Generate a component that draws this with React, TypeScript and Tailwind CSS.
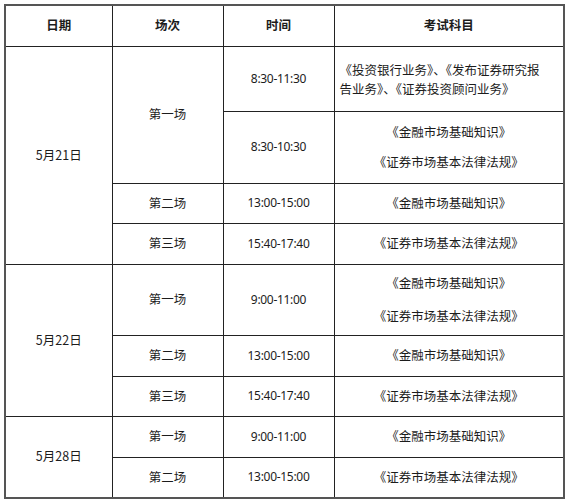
import React from 'react'

type Session = {
    name: string
    slots: { time: string; subjects: string[]; h: number; gap?: string; left?: boolean }[]
}

type Day = { date: string; sessions: Session[] }

const days: Day[] = [
    {
        date: '5月21日',
        sessions: [
            {
                name: '第一场',
                slots: [
                    { time: '8:30-11:30', subjects: ['《投资银行业务》、《发布证券研究报', '告业务》、《证券投资顾问业务》'], h: 65, left: true },
                    { time: '8:30-10:30', subjects: ['《金融市场基础知识》', '《证券市场基本法律法规》'], h: 72, gap: 'gap-[11px]' },
                ],
            },
            { name: '第二场', slots: [{ time: '13:00-15:00', subjects: ['《金融市场基础知识》'], h: 40 }] },
            { name: '第三场', slots: [{ time: '15:40-17:40', subjects: ['《证券市场基本法律法规》'], h: 41 }] },
        ],
    },
    {
        date: '5月22日',
        sessions: [
            {
                name: '第一场',
                slots: [{ time: '9:00-11:00', subjects: ['《金融市场基础知识》', '《证券市场基本法律法规》'], h: 71, gap: 'gap-[14px]' }],
            },
            { name: '第二场', slots: [{ time: '13:00-15:00', subjects: ['《金融市场基础知识》'], h: 41 }] },
            { name: '第三场', slots: [{ time: '15:40-17:40', subjects: ['《证券市场基本法律法规》'], h: 40 }] },
        ],
    },
    {
        date: '5月28日',
        sessions: [
            { name: '第一场', slots: [{ time: '9:00-11:00', subjects: ['《金融市场基础知识》'], h: 41 }] },
            { name: '第二场', slots: [{ time: '13:00-15:00', subjects: ['《证券市场基本法律法规》'], h: 41 }] },
        ],
    },
]

const cell = 'border border-[#222] text-center align-middle p-0'

export default function App() {
    const rows: React.ReactNode[] = []

    days.forEach((day, di) => {
        const dayRows = day.sessions.reduce((n, s) => n + s.slots.length, 0)
        let first = true
        day.sessions.forEach((session, si) => {
            session.slots.forEach((slot, ti) => {
                rows.push(
                    <tr key={`${di}-${si}-${ti}`} style={{ height: slot.h }}>
                        {first && (
                            <td rowSpan={dayRows} className={cell}>
                                {day.date}
                            </td>
                        )}
                        {ti === 0 && (
                            <td rowSpan={session.slots.length} className={cell}>
                                {session.name}
                            </td>
                        )}
                        <td className={`${cell} font-['Noto_Sans',sans-serif] text-[12px] tracking-[-0.3px]`}>
                            {slot.time}
                        </td>
                        <td className={`${cell} px-[4px]`}>
                            <div className={`flex flex-col ${slot.left ? 'items-start pl-[1px] leading-[19px] whitespace-nowrap' : 'items-center'} ${slot.gap ?? ''}`}>
                                {slot.subjects.map(s => (
                                    <p key={s}>{s}</p>
                                ))}
                            </div>
                        </td>
                    </tr>
                )
                first = false
            })
        })
    })

    return (
        <div className="w-[568px] h-[500px] bg-white pt-[4px] pl-[4px] font-['Noto_Sans_CJK_SC',sans-serif] text-[12.5px] text-[#1c1c1c]">
            <table className="table-fixed border-collapse w-[559px] border-2 border-[#555]">
                <colgroup>
                    <col className="w-[107px]" />
                    <col className="w-[111px]" />
                    <col className="w-[111px]" />
                    <col className="w-[230px]" />
                </colgroup>
                <thead>
                    <tr style={{ height: 41 }} className="font-bold">
                        <th className={cell}>日期</th>
                        <th className={cell}>场次</th>
                        <th className={cell}>时间</th>
                        <th className={cell}>考试科目</th>
                    </tr>
                </thead>
                <tbody>{rows}</tbody>
            </table>
        </div>
    )
}
